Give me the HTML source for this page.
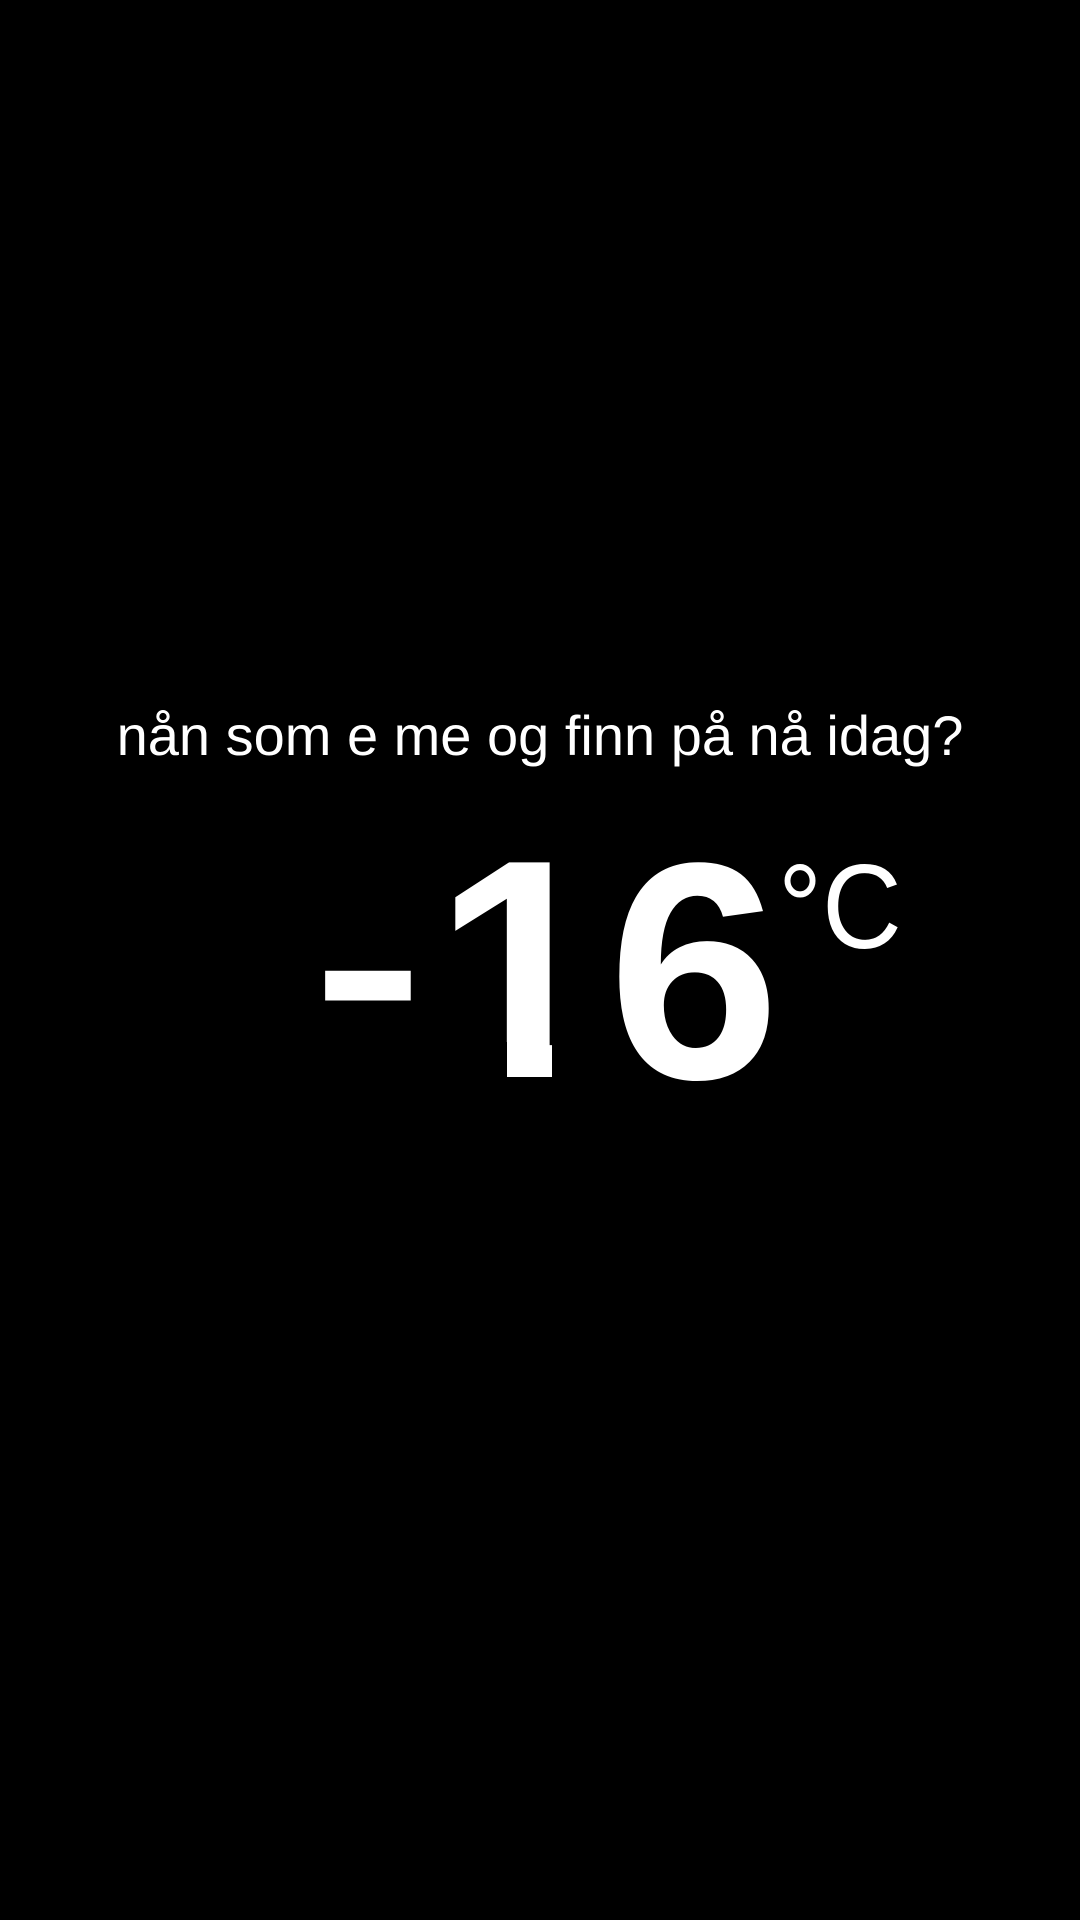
<!DOCTYPE html>
<html><head><meta charset="utf-8"><style>
html,body{margin:0;padding:0;background:#000;}
body{width:1080px;height:1920px;position:relative;overflow:hidden;font-family:"Liberation Sans",sans-serif;color:#fff;}
.q{position:absolute;left:0;width:1080px;top:708px;text-align:center;font-size:56px;line-height:1;white-space:nowrap;}
.d{position:absolute;top:814px;font-size:312px;font-weight:bold;line-height:1;white-space:nowrap;}
.m{position:absolute;background:#000;}
.c{position:absolute;left:778px;top:847px;font-size:120px;line-height:1;white-space:nowrap;transform:scaleX(0.92);transform-origin:0 0;}
</style></head><body>
<div class="q">nån som e me og finn på nå idag?</div>
<span class="d" style="left:312px;transform:translateY(-24px) scale(1.08,0.8);transform-origin:0 80%;">-</span><span class="d" style="left:434px;">1</span><span class="d" style="left:608px;top:817px;font-size:309px;">6</span>
<div class="m" style="left:440px;top:1042px;width:67px;height:45px;"></div>
<div class="m" style="left:552px;top:1042px;width:58px;height:45px;"></div>
<div class="c">°C</div>
</body></html>
